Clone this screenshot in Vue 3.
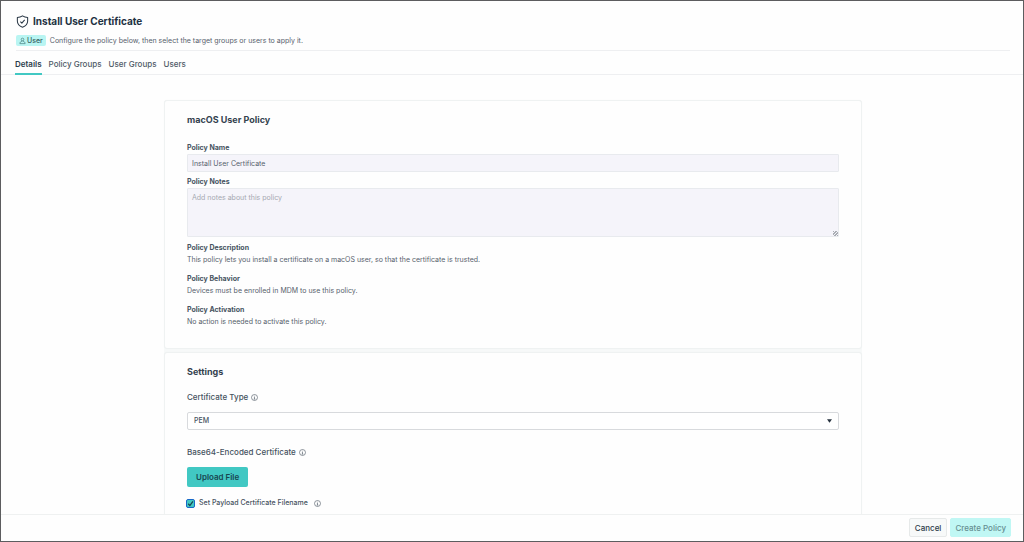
<script setup>
import { ref } from 'vue'

const tabs = ['Details', 'Policy Groups', 'User Groups', 'Users']
const active = ref('Details')
const name = ref('Install User Certificate')
const notes = ref('')
const certType = ref('PEM')
const setFilename = ref(true)
const facts = [
  { title: 'Policy Description', text: 'This policy lets you install a certificate on a macOS user, so that the certificate is trusted.' },
  { title: 'Policy Behavior', text: 'Devices must be enrolled in MDM to use this policy.' },
  { title: 'Policy Activation', text: 'No action is needed to activate this policy.' },
]
</script>

<template>
  <div class="page">
    <header class="head">
      <div class="title-row">
        <svg class="shield" viewBox="0 0 24 24" aria-hidden="true">
          <path d="M12 1.500c3 2 6 2.900 9.500 3.200v6.300c0 5.500-4 9.500-9.500 11.500C6.500 20.500 2.500 16.500 2.500 11V4.700C6 4.400 9 3.500 12 1.500z" />
          <path d="M8 12.200l2.800 2.800L16 9" />
        </svg>
        <h1>Install User Certificate</h1>
      </div>
      <div class="sub-row">
        <span class="badge">
          <svg viewBox="0 0 16 16" aria-hidden="true">
            <circle cx="8" cy="4.500" r="3" />
            <path d="M6.500 7.200v1.600C3.500 9.500 2 11 2 14h12c0-3-1.500-4.500-4.500-5.200V7.200" />
          </svg>
          User
        </span>
        <p>Configure the policy below, then select the target groups or users to apply it.</p>
      </div>
    </header>

    <nav class="tabs">
      <button
        v-for="t in tabs"
        :key="t"
        type="button"
        :class="{ on: active === t }"
        @click="active = t"
      >{{ t }}</button>
    </nav>

    <main class="body">
      <div class="column">
        <section class="card">
          <h2>macOS User Policy</h2>
          <label class="label" for="policy-name">Policy Name</label>
          <input id="policy-name" v-model="name" class="field" type="text">
          <label class="label" for="policy-notes">Policy Notes</label>
          <textarea id="policy-notes" v-model="notes" class="field area" placeholder="Add notes about this policy"></textarea>
          <div v-for="f in facts" :key="f.title" class="fact">
            <h3>{{ f.title }}</h3>
            <p>{{ f.text }}</p>
          </div>
        </section>

        <section class="card settings">
          <h2>Settings</h2>
          <div class="label-row">
            <label for="cert-type">Certificate Type</label>
            <svg class="info" viewBox="0 0 14 14" aria-hidden="true"><circle cx="7" cy="7" r="6" /><path d="M7 6.300v4M7 3.500v1.300M5.800 6.500H7M5.500 10.200h3" /></svg>
          </div>
          <div class="select-wrap">
            <select id="cert-type" v-model="certType">
              <option>PEM</option>
              <option>DER</option>
            </select>
            <svg class="caret" viewBox="0 0 6 4" aria-hidden="true"><path d="M0 0h6L3 4z" /></svg>
          </div>
          <div class="label-row encoded">
            <label for="upload">Base64-Encoded Certificate</label>
            <svg class="info" viewBox="0 0 14 14" aria-hidden="true"><circle cx="7" cy="7" r="6" /><path d="M7 6.300v4M7 3.500v1.300M5.800 6.500H7M5.500 10.200h3" /></svg>
          </div>
          <button id="upload" class="upload" type="button">Upload File</button>
          <div class="check-row">
            <span class="check">
              <input id="set-filename" v-model="setFilename" type="checkbox">
              <svg v-if="setFilename" viewBox="0 0 10 10" aria-hidden="true"><path d="M2.500 5.300l1.800 2L7.700 2.700" /></svg>
            </span>
            <label for="set-filename">Set Payload Certificate Filename</label>
            <svg class="info" viewBox="0 0 14 14" aria-hidden="true"><circle cx="7" cy="7" r="6" /><path d="M7 6.300v4M7 3.500v1.300M5.800 6.500H7M5.500 10.200h3" /></svg>
          </div>
        </section>
      </div>
    </main>

    <footer class="foot">
      <button class="cancel" type="button">Cancel</button>
      <button class="create" type="button" disabled>Create Policy</button>
    </footer>
  </div>
</template>

<style>
body {
  margin: 0;
}
</style>

<style scoped>
.page {
  box-sizing: border-box;
  height: 100vh;
  display: flex;
  flex-direction: column;
  border: 1px solid #5c5d5f;
  background: #fefefe;
  color: #56616c;
  font-family: Inter, "Liberation Sans", sans-serif;
  font-size: 7px;
  line-height: 10px;
}
h1, h2, h3, p {
  margin: 0;
}
button, input, textarea, select {
  box-sizing: border-box;
  margin: 0;
  font: inherit;
  color: inherit;
}
.head {
  margin: 0 13px 0 15px;
  padding-top: 13px;
  padding-bottom: 4px;
  border-bottom: 1px solid #eeeff1;
}
.title-row {
  display: flex;
  align-items: center;
  gap: 4px;
  height: 14px;
}
.shield {
  width: 13px;
  height: 13px;
  fill: none;
  stroke: #2b3947;
  stroke-width: 1.9;
  stroke-linejoin: round;
}
h1 {
  font-size: 10px;
  line-height: 14px;
  font-weight: 700;
  color: #223142;
}
.sub-row {
  display: flex;
  align-items: center;
  gap: 4px;
  margin-top: 7px;
}
.badge {
  display: flex;
  align-items: center;
  gap: 1px;
  height: 11px;
  padding: 0 3px;
  border-radius: 2px;
  background: #b9f5f2;
  color: #35615f;
  font-weight: 500;
}
.badge svg {
  width: 7px;
  height: 8px;
  fill: none;
  stroke: #48807f;
  stroke-width: 1.6;
}
.tabs {
  display: flex;
  gap: 7px;
  height: 24px;
  flex: none;
  box-sizing: border-box;
  padding-left: 14px;
  border-bottom: 1px solid #eeeff1;
}
.tabs button {
  height: 24px;
  padding: 4px 0 0;
  border: 0;
  border-bottom: 2px solid transparent;
  background: none;
  font-size: 8px;
  font-weight: 500;
  color: #4f5b67;
}
.tabs .on {
  border-bottom-color: #41c8c3;
  color: #2c3b4a;
  font-weight: 600;
}
.body {
  flex: 1;
  min-height: 0;
  overflow: hidden;
  padding: 25px 24px 0 26px;
}
.column {
  max-width: 698px;
  margin: 0 auto;
  display: flex;
  flex-direction: column;
  gap: 3px;
  background: #f7f9f9;
  border-radius: 3px;
}
.card {
  display: flex;
  flex-direction: column;
  align-items: flex-start;
  padding: 12px 22px;
  border: 1px solid #eff2f2;
  border-radius: 3px;
  background: #fefefe;
  box-shadow: 0 0 1px #eff2f2;
}
h2 {
  font-size: 9px;
  line-height: 14px;
  font-weight: 700;
  color: #34424f;
}
.label, h3 {
  font-size: 7px;
  line-height: 10px;
  font-weight: 700;
  color: #46535f;
}
h2 + .label {
  margin-top: 16px;
}
.field {
  width: 100%;
  height: 18px;
  margin: 1px 0 5px;
  padding: 0 4px;
  border: 1px solid #e8eaee;
  border-radius: 1px;
  background: #f5f4fa;
}
.area {
  height: 49px;
  margin-bottom: 6px;
  padding: 4px;
  resize: vertical;
}
.area::placeholder {
  color: #a5a8b1;
}
.area::-webkit-resizer {
  background: repeating-linear-gradient(135deg, #a9adb3 0 1px, transparent 1px 2px) no-repeat right bottom / 5px 5px;
}
.fact {
  margin-bottom: 8px;
}
.fact p {
  margin-top: 1px;
  line-height: 12px;
}
.settings {
  padding-bottom: 40px;
}
.label-row, .check-row {
  display: flex;
  align-items: center;
  gap: 4px;
  color: #46535f;
  font-weight: 500;
}
.label-row {
  gap: 3px;
  margin-top: 13px;
  font-size: 8px;
}
.info {
  width: 7px;
  height: 7px;
  fill: none;
  stroke: #56616c;
  stroke-width: 1.3;
}
.select-wrap {
  display: grid;
  align-items: center;
  width: 100%;
  margin-top: 10px;
}
.select-wrap > * {
  grid-area: 1 / 1;
}
select {
  appearance: none;
  width: 100%;
  height: 18px;
  padding: 0 6px;
  border: 1px solid #d8dadd;
  border-radius: 2px;
  background: #fff;
  color: #46535f;
  font-weight: 500;
}
.caret {
  justify-self: end;
  width: 5px;
  height: 4px;
  margin-right: 7px;
  fill: #26323e;
  pointer-events: none;
}
.encoded {
  margin-top: 17px;
}
.upload {
  height: 20px;
  margin-top: 10px;
  padding: 0 9px;
  border: 0;
  border-radius: 2px;
  background: #41c8c3;
  color: #184650;
  font-size: 8px;
  font-weight: 600;
}
.check-row {
  margin-top: 11px;
}
.check {
  display: grid;
  margin-left: -1px;
}
.check > * {
  grid-area: 1 / 1;
  width: 9px;
  height: 9px;
}
.check input {
  appearance: none;
  border: 1px solid #1768c9;
  border-radius: 2px;
  background: #41c8c3;
}
.check svg {
  fill: none;
  stroke: #164350;
  stroke-width: 1.4;
  pointer-events: none;
}
.check-row .info {
  margin-left: 2px;
}
.foot {
  display: flex;
  justify-content: flex-end;
  gap: 3px;
  padding: 3px 12px 4px;
  border-top: 1px solid #eff1f1;
}
.foot button {
  height: 19px;
  border: 1px solid #e6e9e9;
  border-radius: 2px;
  padding: 0 5px;
  background: #f7f9f9;
  color: #2c3b4a;
  font-size: 8px;
  font-weight: 500;
}
.foot .create {
  padding: 0 4px;
  border-color: #c0f7f4;
  background: #c0f7f4;
  color: #668f92;
}
</style>
